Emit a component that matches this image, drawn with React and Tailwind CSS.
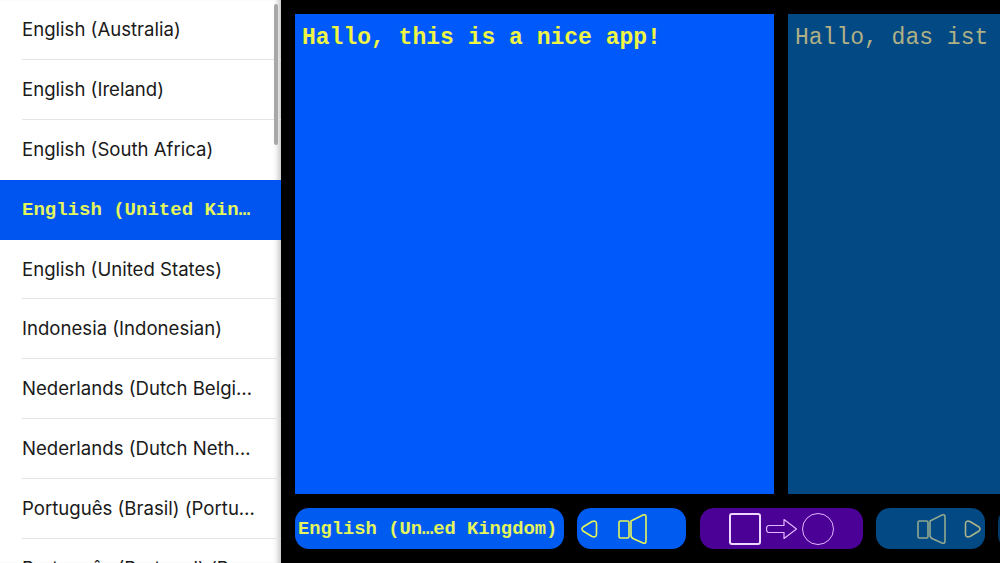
const languages = [
  "English (Australia)",
  "English (Ireland)",
  "English (South Africa)",
  "English (United Kin…",
  "English (United States)",
  "Indonesia (Indonesian)",
  "Nederlands (Dutch Belgi…",
  "Nederlands (Dutch Neth…",
  "Português (Brasil) (Portu…",
  "Português (Portugal) (P…",
];

function Speaker({ stroke }) {
  return (
    <svg width="30" height="32" viewBox="0 0 30 32" fill="none" stroke={stroke} strokeWidth="1.6" strokeLinejoin="round">
      <rect x="1" y="8" width="10" height="17" rx="1.5" />
      <path d="M13 8 L25 2 Q28 1 28 4 L28 28 Q28 31 25 30 L16 26 Q13 25 13 22 Z" />
    </svg>
  );
}

function Triangle({ stroke, flip }) {
  return (
    <svg width="17" height="18" viewBox="0 0 17 18" fill="none" stroke={stroke} strokeWidth="1.6" strokeLinejoin="round" className={flip ? "-scale-x-100" : ""}>
      <path d="M2 7 L11 1.5 Q15.5 0 15.5 4 L15.5 14 Q15.5 18 11 16.5 L2 11 Q0 9 2 7 Z" />
    </svg>
  );
}

export default function App() {
  return (
    <div className="flex w-[1000px] h-[563px] overflow-hidden bg-black font-['Inter',sans-serif]">
      <div className="relative w-[281px] h-full shrink-0 overflow-hidden bg-white shadow-[inset_-7px_0_6px_-5px_rgba(0,0,0,0.28)]">
        {languages.map((lang, i) =>
          i === 3 ? (
            <div key={lang} className="flex items-center h-[59.6px] mt-[0.6px] pl-[22px] bg-[#0055f0] text-[#e4f55c] font-['Liberation_Mono',monospace] font-bold text-[19px]">
              {lang}
            </div>
          ) : (
            <div key={lang} className="h-[59.8px] pl-[22px]">
              <div className={i === 2 ? "flex items-center h-full pt-px text-[18.6px] text-[#1a1a1a] whitespace-nowrap" : "flex items-center h-full pt-px border-b border-[#e4e4e4] text-[18.6px] text-[#1a1a1a] whitespace-nowrap"}>
                {lang}
              </div>
            </div>
          )
        )}
        <div className="absolute right-[3px] top-[4px] w-[4px] h-[141px] rounded-full bg-[#a8a8a8]" />
      </div>

      <div className="flex flex-col min-w-0 pl-[14px] pt-[14px]">
        <div className="flex gap-[14px] h-[480px]">
          <div className="w-[479px] shrink-0 bg-[#0059fa] pl-[7px] pt-[11px] text-[23px] leading-[26px] font-bold text-[#eef545] font-['Liberation_Mono',monospace] whitespace-nowrap">
            Hallo, this is a nice app!
          </div>
          <div className="w-[479px] shrink-0 bg-[#034a85] pl-[7px] pt-[11px] text-[23px] leading-[26px] text-[#b0b085] font-['Liberation_Mono',monospace] whitespace-nowrap">
            Hallo, das ist eine schöne App!
          </div>
        </div>

        <div className="flex gap-[13px] mt-[14px] h-[41px]">
          <div className="flex items-center w-[269px] shrink-0 pl-[3px] pt-px rounded-[14px] bg-[#005cf0] text-[18.8px] font-bold text-[#e4f55c] font-['Liberation_Mono',monospace] whitespace-nowrap">
            English (Un…ed Kingdom)
          </div>
          <div className="flex items-center w-[109px] shrink-0 pl-[4px] rounded-[14px] bg-[#005cf0]">
            <Triangle stroke="#e4f55c" />
            <div className="ml-[20px]"><Speaker stroke="#e4f55c" /></div>
          </div>
          <div className="flex items-center w-[163px] ml-px shrink-0 pl-[29px] rounded-[14px] bg-[#4b0096]">
            <div className="w-[32px] h-[32px] rounded-[3px] border-2 border-[#efd8ff]" />
            <svg width="32" height="22" viewBox="0 0 32 22" fill="none" stroke="#e2b8ff" strokeWidth="1.2" strokeLinejoin="round" className="ml-[5px]">
              <path d="M3 7.5 H18 V1.5 L30.5 11 L18 20.5 V14.5 H3 Q0.5 14.5 0.5 11 Q0.5 7.5 3 7.5 Z" />
            </svg>
            <div className="ml-[4px] w-[32px] h-[32px] rounded-full border border-[#e2b8ff]" />
          </div>
          <div className="flex items-center w-[109px] shrink-0 pl-[41px] rounded-[14px] bg-[#034a85]">
            <Speaker stroke="#8fa88f" />
            <div className="ml-[17px]"><Triangle stroke="#a9b28a" flip /></div>
          </div>
          <div className="w-[109px] shrink-0 rounded-[14px] bg-[#033a6a]" />
        </div>
      </div>
    </div>
  );
}
